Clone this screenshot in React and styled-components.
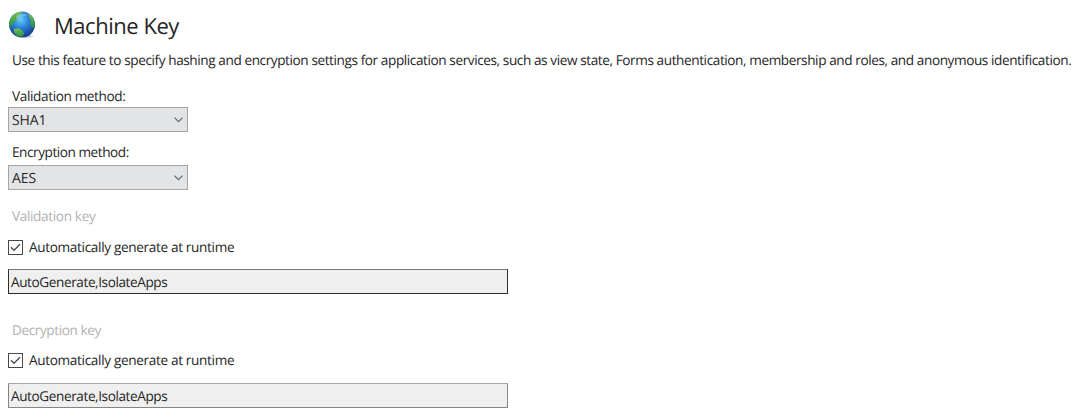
import React from 'react';
import styled, { createGlobalStyle } from 'styled-components';

const GlobalStyle = createGlobalStyle`
  * { box-sizing: border-box; }
  body { margin: 0; background: #fff; overflow: hidden; }
`;

const Page = styled.main`
  height: 417px;
  padding-left: 8px;
  display: flex;
  flex-direction: column;
  align-items: flex-start;
  font-family: "Open Sans", "Noto Sans", sans-serif;
  font-size: 13.6px;
  color: #252525;
  white-space: nowrap;
  text-rendering: geometricPrecision;
`;

const Header = styled.header`
  display: flex;
  align-items: center;
  height: 49px;
`;

const Title = styled.h1`
  margin: 2px 0 0 16px;
  font-size: 22px;
  font-weight: 400;
  line-height: 30px;
  letter-spacing: ${(p) => p.$track}px;
`;

const Description = styled.p`
  margin: 0 0 15px 4px;
  line-height: 22px;
  letter-spacing: ${(p) => p.$track}px;
`;

const Label = styled.div`
  height: ${(p) => p.$h || 21}px;
  margin-left: 4px;
  line-height: 19px;
  letter-spacing: ${(p) => p.$track}px;
  color: ${(p) => (p.$muted ? '#b2b2b2' : 'inherit')};
`;

const Select = styled.div`
  display: flex;
  align-items: center;
  justify-content: space-between;
  width: 180px;
  height: 25px;
  margin-bottom: ${(p) => p.$gap}px;
  padding: 1px 4px 0 3px;
  border: 1px solid #a5a5a5;
  background: #e3e4e6;
  font-size: 14px;
  letter-spacing: ${(p) => p.$track}px;
`;

const CheckRow = styled.div`
  display: flex;
  align-items: center;
  gap: 6px;
  height: 15px;
  margin: ${(p) => p.$top}px 0 ${(p) => p.$bottom}px;
  letter-spacing: ${(p) => p.$track}px;
  line-height: 17px;

  span { margin-bottom: 2px; }
`;

const Field = styled.div`
  width: 500px;
  height: 25px;
  padding-left: 2px;
  border: 1px solid ${(p) => (p.$strong ? '#2d2d2f' : '#858585')};
  border-top: 1px solid ${(p) => (p.$strong ? '#777' : '#a8a8a8')};
  background: #efefef;
  line-height: 24px;
  letter-spacing: ${(p) => p.$track}px;
`;

const Spacer = styled.div`
  height: 26px;
`;

const Globe = () => (
  <svg width="30" height="30" viewBox="0 0 30 30">
    <defs>
      <radialGradient id="sea" cx="0.45" cy="0.32" r="0.65">
        <stop offset="0" stopColor="#6ccdf5" />
        <stop offset="0.45" stopColor="#2b85dc" />
        <stop offset="1" stopColor="#173f94" />
      </radialGradient>
      <linearGradient id="land" x1="0" y1="0" x2="0" y2="1">
        <stop offset="0" stopColor="#79bd55" />
        <stop offset="1" stopColor="#239044" />
      </linearGradient>
      <radialGradient id="shade">
        <stop offset="0" stopColor="#7d8998" />
        <stop offset="1" stopColor="#fff" stopOpacity="0" />
      </radialGradient>
      <clipPath id="ball"><circle cx="14" cy="14.5" r="13" /></clipPath>
    </defs>
    <ellipse cx="18" cy="26" rx="11" ry="3.5" fill="url(#shade)" />
    <circle cx="14" cy="14.5" r="13" fill="url(#sea)" />
    <g clipPath="url(#ball)" fill="url(#land)">
      <path d="M3 6 9 2h5l-2 3-2 2-2 4-3 2-2 4-3 1V9Z" />
      <path d="m6 19 4-.7 4 2 2 3-1 3-5 .5-4-4Z" />
      <path d="m20 3 5 4 2 6-1 5-3-1-1-4 1-3-2-3Z" />
    </g>
    <path d="M8 6Q14 2 20 5 14 6 9 10Z" fill="#c6edfa" opacity=".35" />
  </svg>
);

const Chevron = () => (
  <svg width="9" height="6" viewBox="0 0 9 6" fill="none" stroke="#606266" strokeWidth="1.1">
    <path d="m.5.7 4 4 4-4" />
  </svg>
);

const CheckBox = () => (
  <svg width="15" height="15" viewBox="0 0 15 15" fill="none" stroke="#484848">
    <rect x=".5" y=".5" width="14" height="14" fill="#fff" />
    <path d="m3 7.3 3 3 6-6" strokeWidth="1.3" />
  </svg>
);

export default function App() {
  return (
    <>
      <GlobalStyle />
      <Page>
        <Header>
          <Globe />
          <Title $track={-0.47}>Machine Key</Title>
        </Header>
        <Description $track={-0.41}>
          Use this feature to specify hashing and encryption settings for application services, such as view state, Forms authentication, membership and roles, and anonymous identification.
        </Description>
        <Label $track={-0.37}>Validation method:</Label>
        <Select $gap={10} $track={-0.1}>SHA1<Chevron /></Select>
        <Label $h={23} $track={-0.45}>Encryption method:</Label>
        <Select $gap={16} $track={-0.1}>AES<Chevron /></Select>
        <Label $muted $h={22} $track={-0.35}>Validation key</Label>
        <CheckRow $top={12} $bottom={14} $track={-0.34}><CheckBox /><span>Automatically generate at runtime</span></CheckRow>
        <Field $strong $track={-0.41}>AutoGenerate,IsolateApps</Field>
        <Spacer />
        <Label $muted $h={22} $track={-0.4}>Decryption key</Label>
        <CheckRow $top={11} $bottom={15} $track={-0.34}><CheckBox /><span>Automatically generate at runtime</span></CheckRow>
        <Field $track={-0.41}>AutoGenerate,IsolateApps</Field>
      </Page>
    </>
  );
}
